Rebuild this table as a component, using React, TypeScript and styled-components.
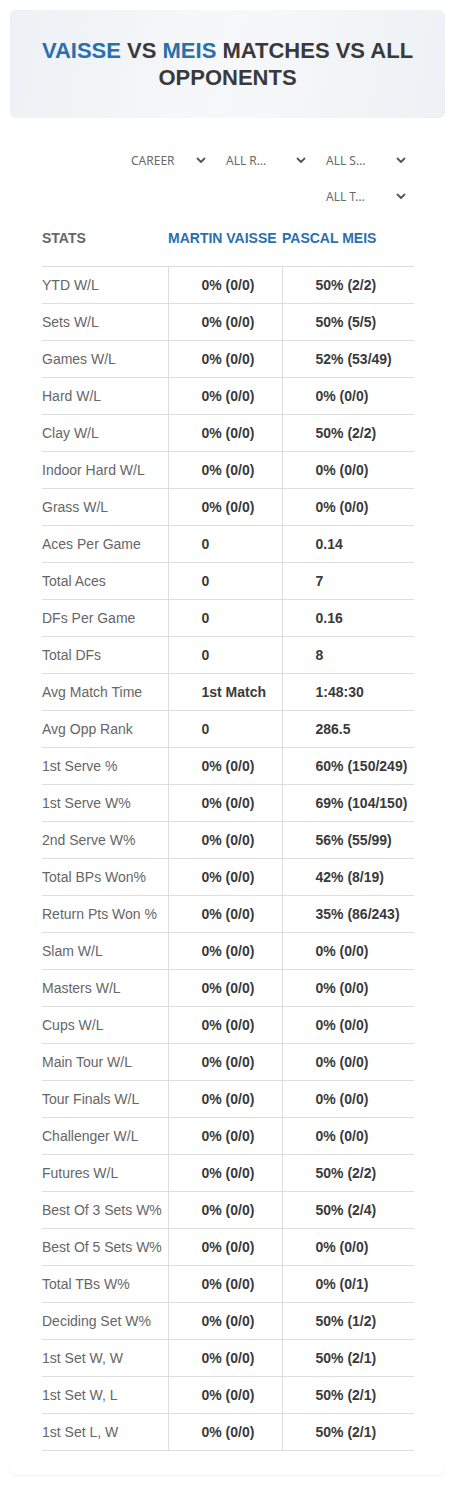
import React from "react";
import styled, { createGlobalStyle } from "styled-components";

const GlobalStyle = createGlobalStyle`
  html, body {
    margin: 0;
    padding: 0;
    background: #fff;
  }
  body {
    font-family: "Liberation Sans", Arial, sans-serif;
  }
`;

const Page = styled.div`
  padding: 10px;
  display: flex;
  flex-direction: column;
  gap: 10px;
`;

const TitleCard = styled.div`
  height: 108px;
  border-radius: 6px;
  background: linear-gradient(100deg, #edf1f5 0%, #f7f8fa 50%, #edf1f5 100%);
  display: flex;
  align-items: center;
  justify-content: center;
  padding: 0 20px;
  box-sizing: border-box;
`;

const Title = styled.h1`
  margin: 0;
  font-size: 22px;
  line-height: 27px;
  font-weight: 700;
  color: #3a3a3a;
  text-align: center;
  text-transform: uppercase;
`;

const Name = styled.span`
  color: #2a6fae;
`;

const StatsCard = styled.div`
  background: #fff;
  border-radius: 6px;
  box-shadow: 0 1px 2px rgba(0, 0, 0, 0.06);
  padding: 14px 31px 24px 32px;
`;

const Filters = styled.div`
  display: flex;
  flex-wrap: wrap;
  justify-content: flex-end;
`;

const Select = styled.div<{ $inset?: number }>`
  width: 100px;
  height: 36px;
  box-sizing: border-box;
  padding: 0 8px 0 ${(p) => p.$inset ?? 12}px;
  display: flex;
  align-items: center;
  justify-content: space-between;
  font-family: "Noto Sans", "Open Sans", sans-serif;
  font-size: 12px;
  color: #6a6a6a;
  cursor: pointer;
`;

const Chevron = () => (
  <svg width="10" height="7" viewBox="0 0 10 7" fill="none">
    <path d="M1.5 1.5 L5 5 L8.5 1.5" stroke="#555" strokeWidth="1.8" strokeLinecap="round" strokeLinejoin="round" />
  </svg>
);

const Table = styled.table`
  width: 100%;
  border-collapse: collapse;
  table-layout: fixed;
  font-size: 14px;
`;

const HeadCell = styled.th<{ $accent?: boolean }>`
  height: 48px;
  padding: 0 0 4px;
  text-align: left;
  font-weight: 700;
  white-space: nowrap;
  color: ${(p) => (p.$accent ? "#2a6fae" : "#666")};
  border-bottom: 1px solid #dcdcdc;
`;

const Row = styled.tr`
  height: 37px;
  border-bottom: 1px solid #dedede;
`;

const Label = styled.td`
  padding: 0;
  color: #666;
  white-space: nowrap;
`;

const Value = styled.td`
  padding: 0 0 0 33px;
  font-weight: 700;
  color: #3a3a3a;
  border-left: 1px solid #dedede;
  white-space: nowrap;
`;

const rows: [string, string, string][] = [
  ["YTD W/L", "0% (0/0)", "50% (2/2)"],
  ["Sets W/L", "0% (0/0)", "50% (5/5)"],
  ["Games W/L", "0% (0/0)", "52% (53/49)"],
  ["Hard W/L", "0% (0/0)", "0% (0/0)"],
  ["Clay W/L", "0% (0/0)", "50% (2/2)"],
  ["Indoor Hard W/L", "0% (0/0)", "0% (0/0)"],
  ["Grass W/L", "0% (0/0)", "0% (0/0)"],
  ["Aces Per Game", "0", "0.14"],
  ["Total Aces", "0", "7"],
  ["DFs Per Game", "0", "0.16"],
  ["Total DFs", "0", "8"],
  ["Avg Match Time", "1st Match", "1:48:30"],
  ["Avg Opp Rank", "0", "286.5"],
  ["1st Serve %", "0% (0/0)", "60% (150/249)"],
  ["1st Serve W%", "0% (0/0)", "69% (104/150)"],
  ["2nd Serve W%", "0% (0/0)", "56% (55/99)"],
  ["Total BPs Won%", "0% (0/0)", "42% (8/19)"],
  ["Return Pts Won %", "0% (0/0)", "35% (86/243)"],
  ["Slam W/L", "0% (0/0)", "0% (0/0)"],
  ["Masters W/L", "0% (0/0)", "0% (0/0)"],
  ["Cups W/L", "0% (0/0)", "0% (0/0)"],
  ["Main Tour W/L", "0% (0/0)", "0% (0/0)"],
  ["Tour Finals W/L", "0% (0/0)", "0% (0/0)"],
  ["Challenger W/L", "0% (0/0)", "0% (0/0)"],
  ["Futures W/L", "0% (0/0)", "50% (2/2)"],
  ["Best Of 3 Sets W%", "0% (0/0)", "50% (2/4)"],
  ["Best Of 5 Sets W%", "0% (0/0)", "0% (0/0)"],
  ["Total TBs W%", "0% (0/0)", "0% (0/1)"],
  ["Deciding Set W%", "0% (0/0)", "50% (1/2)"],
  ["1st Set W, W", "0% (0/0)", "50% (2/1)"],
  ["1st Set W, L", "0% (0/0)", "50% (2/1)"],
  ["1st Set L, W", "0% (0/0)", "50% (2/1)"],
];

const filters = [
  { label: "CAREER", inset: 17 },
  { label: "ALL R…" },
  { label: "ALL S…" },
  { label: "ALL T…" },
];

export default function App() {
  return (
    <Page>
      <GlobalStyle />
      <TitleCard>
        <Title>
          <Name>Vaisse</Name> vs <Name>Meis</Name> matches vs all opponents
        </Title>
      </TitleCard>

      <StatsCard>
        <Filters>
          {filters.map((f) => (
            <Select key={f.label} $inset={f.inset}>
              <span>{f.label}</span>
              <Chevron />
            </Select>
          ))}
        </Filters>

        <Table>
          <colgroup>
            <col style={{ width: 126 }} />
            <col style={{ width: 114 }} />
            <col />
          </colgroup>
          <thead>
            <tr>
              <HeadCell>STATS</HeadCell>
              <HeadCell $accent>MARTIN VAISSE</HeadCell>
              <HeadCell $accent>PASCAL MEIS</HeadCell>
            </tr>
          </thead>
          <tbody>
            {rows.map(([label, a, b]) => (
              <Row key={label}>
                <Label>{label}</Label>
                <Value>{a}</Value>
                <Value>{b}</Value>
              </Row>
            ))}
          </tbody>
        </Table>
      </StatsCard>
    </Page>
  );
}
